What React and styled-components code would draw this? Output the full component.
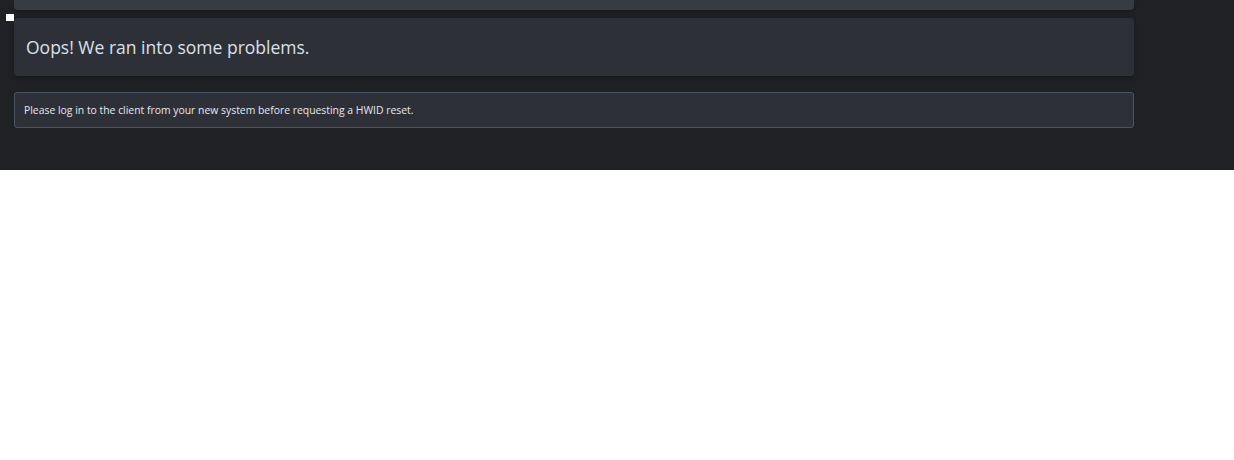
import React from "react";
import styled, { createGlobalStyle } from "styled-components";

const GlobalStyle = createGlobalStyle`
  html, body {
    margin: 0;
    padding: 0;
    background: #ffffff;
    font-family: "Open Sans", "Liberation Sans", sans-serif;
  }
`

const Page = styled.div`
  position: relative;
  background: #202125;
  padding: 0 100px 42px 14px;
  display: flex;
  flex-direction: column;
`

const Marker = styled.span`
  position: absolute;
  left: 6px;
  top: 14px;
  width: 8px;
  height: 7px;
  background: #ffffff;
`

const PrevCard = styled.div`
  height: 10px;
  background: #393b42;
  border-radius: 0 0 4px 4px;
  box-shadow: 0 2px 4px rgba(0, 0, 0, 0.25);
`

const Card = styled.div`
  margin-top: 8px;
  height: 58px;
  box-sizing: border-box;
  padding: 0 12px;
  display: flex;
  align-items: center;
  background: #2e3038;
  border-radius: 4px;
  box-shadow: 0 2px 4px rgba(0, 0, 0, 0.25);
`

const Title = styled.h4`
  margin: 0;
  font-size: 17.5px;
  font-weight: 400;
  color: #dbe0e8;
`

const Alert = styled.div`
  margin-top: 16px;
  height: 36px;
  box-sizing: border-box;
  padding: 0 9px;
  display: flex;
  align-items: center;
  background: #2e3038;
  border: 1px solid #4b5364;
  border-radius: 3px;
  font-size: 10.4px;
  color: #e4e8ef;
`

const App = () => {
  return (
    <>
      <GlobalStyle />
      <Page>
        <Marker />
        <PrevCard />
        <Card>
          <Title>Oops! We ran into some problems.</Title>
        </Card>
        <Alert>Please log in to the client from your new system before requesting a HWID reset.</Alert>
      </Page>
    </>
  )
}

export default App
